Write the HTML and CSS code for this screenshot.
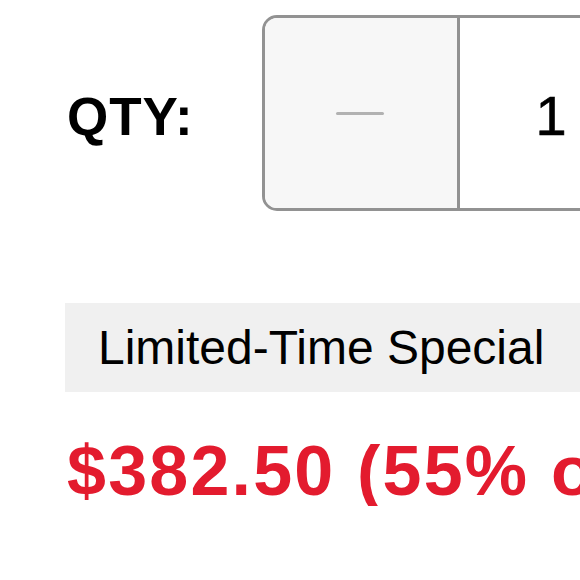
FILE: index.html
```html
<!DOCTYPE html>
<html lang="en">
<head>
<meta charset="utf-8">
<link rel="stylesheet" href="styles.css">
<title>Quantity</title>
</head>
<body>
<div class="page">
  <div class="qty-row">
    <span class="qty-label">QTY:</span>
    <div class="stepper">
      <button class="step-btn minus" aria-label="Decrease"><span class="minus-bar"></span></button>
      <div class="step-value">1</div>
      <button class="step-btn plus" aria-label="Increase">+</button>
    </div>
  </div>
  <div class="promo">Limited-Time Special</div>
  <div class="price">$382.50 (55% off)</div>
</div>
</body>
</html>
```
FILE: styles.css
```css
html, body {
  margin: 0;
  padding: 0;
  background: #ffffff;
  overflow: hidden;
}
.page {
  width: 1000px;
  padding: 15px 0 0 65px;
  font-family: "Liberation Sans", Arial, sans-serif;
  color: #000;
  white-space: nowrap;
}
.qty-row {
  display: flex;
  align-items: center;
}
.qty-label {
  font-size: 53px;
  font-weight: 700;
  letter-spacing: 1px;
  margin-left: 2px;
  width: 195px;
  line-height: 1;
  padding-top: 6px;
}
.stepper {
  display: flex;
  height: 190px;
  border: 3px solid #929292;
  border-radius: 15px;
  overflow: hidden;
}
.step-btn {
  border: 0;
  margin: 0;
  padding: 0;
  width: 195px;
  background: #f7f7f7;
  display: flex;
  align-items: center;
  justify-content: center;
  font-family: inherit;
}
.minus {
  border-right: 3px solid #929292;
}
.minus-bar {
  display: block;
  width: 48px;
  height: 3px;
  border-radius: 2px;
  background: #b2b2b2;
  margin-left: -2px;
}
.step-value {
  width: 182px;
  display: flex;
  align-items: center;
  justify-content: center;
  font-size: 56px;
  color: #000;
  -webkit-text-stroke: 0.6px #000;
  background: #fff;
  padding-top: 4px;
}
.plus {
  border-left: 3px solid #929292;
  font-size: 56px;
  color: #b2b2b2;
}
.promo {
  margin-top: 92px;
  height: 89px;
  line-height: 90px;
  background: #f0f0f0;
  padding-left: 33px;
  font-size: 48px;
  color: #000;
}
.price {
  margin-top: 44px;
  font-size: 70px;
  line-height: 70px;
  font-weight: 700;
  letter-spacing: 2.2px;
  color: #e31b2e;
  padding-left: 2px;
}
```
